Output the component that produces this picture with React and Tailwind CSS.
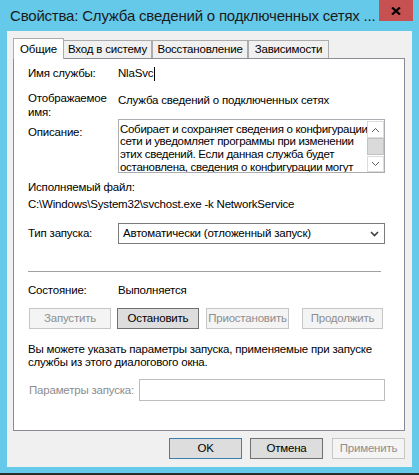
import clsx from "clsx";

function Btn({ children, disabled, primary, className }) {
  return (
    <div
      className={clsx(
        "h-[21px] flex items-center justify-center border whitespace-nowrap",
        disabled && "border-[#c6c6c6] bg-[#f4f4f4] text-[#8e8e8e]",
        !disabled && primary && "border-[#3c7fb1] bg-[#dddddd] text-black",
        !disabled && !primary && "border-[#707070] bg-[#dddddd] text-black",
        className
      )}
    >
      {children}
    </div>
  );
}

function Tab({ children, active, className }) {
  return (
    <div
      className={clsx(
        "flex items-center justify-center border border-b-0 whitespace-nowrap",
        active
          ? "h-[21px] -mb-px bg-white border-[#acacac] relative z-10"
          : "h-[18px] bg-[#f0f0f0] border-[#acacac]",
        className
      )}
    >
      {children}
    </div>
  );
}

function Chevron({ up }) {
  return (
    <svg width="9" height="6" viewBox="0 0 9 6">
      <polyline
        points={up ? "1,5 4.5,1.5 8,5" : "1,1 4.5,4.5 8,1"}
        fill="none"
        stroke="#606060"
        strokeWidth="1"
      />
    </svg>
  );
}

export default function App() {
  return (
    <div className="w-[419px] h-[475px] bg-[#65c9ea] flex flex-col overflow-hidden font-['Liberation_Sans',Arial,sans-serif] text-[11.5px] tracking-[-0.2px] leading-[15px] text-black">
      {/* title bar */}
      <div className="h-[31px] flex items-start">
        <div className="pl-[10px] pt-[7px] text-[15px] tracking-[-0.2px] leading-[18px] text-[#1b1b1b] whitespace-nowrap">
          Свойства: Служба сведений о подключенных сетях ...
        </div>
        <div className="ml-auto mr-[6px] w-[34px] h-[21px] bg-[#c75050] flex items-center justify-center">
          <svg width="10" height="8" viewBox="0 0 10 8">
            <path d="M1 0.5 L9 7.5 M9 0.5 L1 7.5" stroke="#000" strokeWidth="2.2" />
          </svg>
        </div>
      </div>

      {/* dialog body */}
      <div className="mx-[7px] h-[436px] bg-[#f0f0f0] flex flex-col pt-[7px] pl-[6px]">
        <div className="flex items-end h-[20px]">
          <Tab active className="w-[51px]">Общие</Tab>
          <Tab className="w-[88px] border-l-0">Вход в систему</Tab>
          <Tab className="w-[96px]">Восстановление</Tab>
          <Tab className="w-[81px]">Зависимости</Tab>
        </div>

        <div className="w-[392px] h-[373px] border border-[#898c95] bg-white flex flex-col pl-[14px]">
          <div className="mt-[7px] h-[15px] flex items-center">
            <div className="w-[90px]">Имя службы:</div>
            <div className="flex items-center">
              NlaSvc
              <span className="ml-px w-px h-[14px] bg-black" />
            </div>
          </div>

          <div className="mt-[10px] flex">
            <div className="w-[90px] leading-[14px]">
              Отображаемое
              <br />
              имя:
            </div>
            <div className="mt-[2px] leading-[14px]">Служба сведений о подключенных сетях</div>
          </div>

          <div className="flex">
            <div className="w-[90px] pt-[6px]">Описание:</div>
            <div className="w-[267px] h-[54px] border border-[#abadb3] flex">
              <div className="flex-1 pl-[1px] pt-[2.5px] leading-[12.7px] tracking-[-0.3px] overflow-hidden whitespace-nowrap">
                <div>Собирает и сохраняет сведения о конфигурации</div>
                <div>сети и уведомляет программы при изменении</div>
                <div>этих сведений. Если данная служба будет</div>
                <div>остановлена, сведения о конфигурации могут</div>
              </div>
              <div className="w-[17px] flex flex-col bg-white">
                <div className="mt-px h-[17px] border border-[#dcdcdc] flex items-center justify-center">
                  <Chevron up />
                </div>
                <div className="h-[17px] bg-[#dadada] border border-[#c2c2c2]" />
                <div className="flex-1" />
                <div className="h-[16px] border border-[#dcdcdc] flex items-center justify-center">
                  <Chevron />
                </div>
              </div>
            </div>
          </div>

          <div className="mt-[7px]">Исполняемый файл:</div>
          <div className="mt-[2px] whitespace-nowrap">C:\Windows\System32\svchost.exe -k NetworkService</div>

          <div className="mt-[11px] h-[21px] flex items-center">
            <div className="w-[90px]">Тип запуска:</div>
            <div className="w-[267px] h-[21px] border border-[#7a7a7a] flex items-center pl-[4px] pr-[5px]">
              <span className="flex-1">Автоматически (отложенный запуск)</span>
              <svg width="9" height="6" viewBox="0 0 9 6">
                <polyline points="1,1 4.5,4.5 8,1" fill="none" stroke="#404040" strokeWidth="1.6" />
              </svg>
            </div>
          </div>

          <div className="mt-[27px] h-px w-[353px] bg-[#a0a0a0]" />

          <div className="mt-[11px] h-[15px] flex items-center">
            <div className="w-[90px]">Состояние:</div>
            <div>Выполняется</div>
          </div>

          <div className="mt-[10px] flex">
            <Btn disabled className="ml-px w-[82px]">Запустить</Btn>
            <Btn className="ml-[6px] w-[82px]">Остановить</Btn>
            <Btn disabled className="ml-[7px] w-[83px]">Приостановить</Btn>
            <Btn disabled className="ml-[13px] w-[81px]">Продолжить</Btn>
          </div>

          <div className="mt-[14px] leading-[13px] whitespace-nowrap">
            Вы можете указать параметры запуска, применяемые при запуске
            <br />
            службы из этого диалогового окна.
          </div>

          <div className="mt-[10px] h-[22px] flex items-center">
            <div className="w-[111px] pl-px text-[#8d8d8d] whitespace-nowrap">Параметры запуска:</div>
            <div className="w-[246px] h-[22px] border border-[#bdbdbd] bg-white" />
          </div>
        </div>

        <div className="mt-[7px] flex pl-[156px]">
          <Btn primary className="w-[73px]">OK</Btn>
          <Btn className="ml-[8px] w-[73px]">Отмена</Btn>
          <Btn disabled className="ml-[9px] w-[73px]">Применить</Btn>
        </div>
      </div>

      <div className="h-[6px]" />
      <div className="h-[2px] bg-[#2b2b2b]" />
    </div>
  );
}
